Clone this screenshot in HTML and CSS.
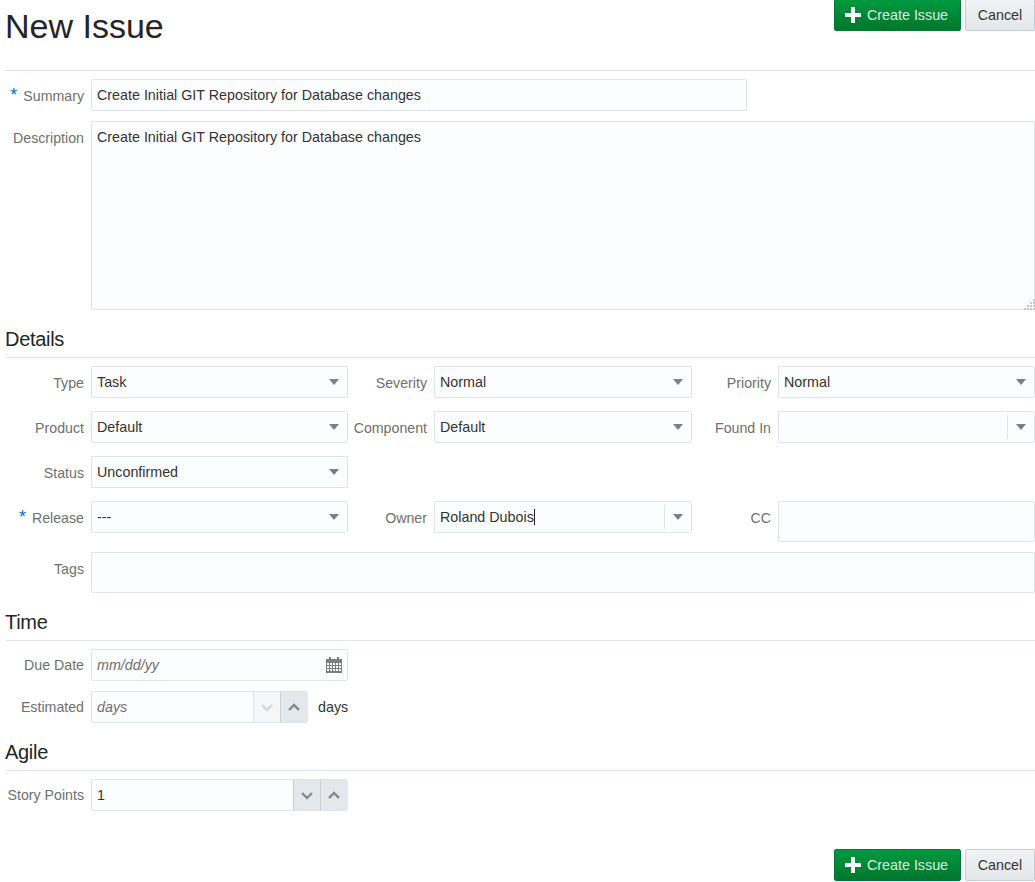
FILE: index.html
```html
<!DOCTYPE html>
<html lang="en">
	<head>
		<meta charset="UTF-8">
		<title>New Issue</title>
		<link rel="stylesheet" href="styles.css">
	</head>
	<body>
		<div class="page">
			<div class="page_head">
				<h1>New Issue</h1>
				<div class="actions">
					<button class="btn btn_primary" type="button">
						<svg class="plus" width="16" height="16" viewBox="0 0 16 16"><path d="M6 0h4v6h6v4h-6v6H6v-6H0V6h6z"/></svg>
						Create Issue
					</button>
					<button class="btn btn_cancel" type="button">Cancel</button>
				</div>
			</div>

			<div class="section">
				<div class="field field_summary">
					<label class="lbl lbl_main"><span class="req">*</span>Summary</label>
					<input class="ctl ctl_grow" type="text" value="Create Initial GIT Repository for Database changes">
				</div>
				<div class="field field_desc">
					<label class="lbl lbl_main">Description</label>
					<div class="desc_box">
						<textarea class="ctl desc">Create Initial GIT Repository for Database changes</textarea>
						<svg class="grip" width="11" height="11" viewBox="0 0 11 11"><path d="M9 0h2v2H9zM6 3h2v2H6zM9 3h2v2H9zM3 6h2v2H3zM6 6h2v2H6zM9 6h2v2H9zM0 9h2v2H0zM3 9h2v2H3zM6 9h2v2H6zM9 9h2v2H9z" /></svg>
					</div>
				</div>
			</div>

			<h2>Details</h2>
			<div class="details">
				<div class="field">
					<label class="lbl lbl_main">Type</label>
					<div class="ctl select"><span>Task</span><i class="arrow"></i></div>
				</div>
				<div class="field">
					<label class="lbl">Severity</label>
					<div class="ctl select"><span>Normal</span><i class="arrow"></i></div>
				</div>
				<div class="field">
					<label class="lbl">Priority</label>
					<div class="ctl select"><span>Normal</span><i class="arrow"></i></div>
				</div>

				<div class="field">
					<label class="lbl lbl_main">Product</label>
					<div class="ctl select"><span>Default</span><i class="arrow"></i></div>
				</div>
				<div class="field">
					<label class="lbl">Component</label>
					<div class="ctl select"><span>Default</span><i class="arrow"></i></div>
				</div>
				<div class="field">
					<label class="lbl">Found In</label>
					<div class="ctl select combo"><span></span><b class="sep"></b><i class="arrow"></i></div>
				</div>

				<div class="field">
					<label class="lbl lbl_main">Status</label>
					<div class="ctl select"><span>Unconfirmed</span><i class="arrow"></i></div>
				</div>
				<div></div>
				<div></div>

				<div class="field">
					<label class="lbl lbl_main"><span class="req">*</span>Release</label>
					<div class="ctl select"><span>---</span><i class="arrow"></i></div>
				</div>
				<div class="field">
					<label class="lbl">Owner</label>
					<div class="ctl select combo"><span class="typed">Roland Dubois</span><b class="sep"></b><i class="arrow"></i></div>
				</div>
				<div class="field">
					<label class="lbl">CC</label>
					<div class="ctl tall"></div>
				</div>
			</div>
			<div class="field field_tags">
				<label class="lbl lbl_main">Tags</label>
				<div class="ctl tall ctl_grow"></div>
			</div>

			<h2 class="h2_next">Time</h2>
			<div class="stack">
				<div class="field">
					<label class="lbl lbl_main">Due Date</label>
					<div class="ctl select date">
						<span class="hint">mm/dd/yy</span>
						<svg class="cal" width="16" height="16" viewBox="0 0 16 16"><path d="M3 0h2v2h6V0h2v2h3v14H0V2h3zM1 6v2h2V6zm3 0v2h2V6zm3 0v2h2V6zm3 0v2h2V6zm3 0v2h2V6zM1 9v2h2V9zm3 0v2h2V9zm3 0v2h2V9zm3 0v2h2V9zm3 0v2h2V9zM1 12v2h2v-2zm3 0v2h2v-2zm3 0v2h2v-2zm3 0v2h2v-2zm3 0v2h2v-2z" fill-rule="evenodd"/></svg>
					</div>
				</div>
				<div class="field">
					<label class="lbl lbl_main">Estimated</label>
					<div class="ctl spin spin_short">
						<span class="hint">days</span>
						<button class="step step_off" type="button"><svg width="14" height="9" viewBox="0 0 14 9"><path d="M2 2l5 5 5-5" /></svg></button>
						<button class="step" type="button"><svg width="14" height="9" viewBox="0 0 14 9"><path d="M2 7l5-5 5 5" /></svg></button>
					</div>
					<span class="unit">days</span>
				</div>
			</div>

			<h2 class="h2_next">Agile</h2>
			<div class="field field_points">
				<label class="lbl lbl_main">Story Points</label>
				<div class="ctl spin">
					<span class="val">1</span>
					<button class="step" type="button"><svg width="14" height="9" viewBox="0 0 14 9"><path d="M2 2l5 5 5-5" /></svg></button>
					<button class="step" type="button"><svg width="14" height="9" viewBox="0 0 14 9"><path d="M2 7l5-5 5 5" /></svg></button>
				</div>
			</div>

			<div class="actions actions_bottom">
				<button class="btn btn_primary" type="button">
					<svg class="plus" width="16" height="16" viewBox="0 0 16 16"><path d="M6 0h4v6h6v4h-6v6H6v-6H0V6h6z"/></svg>
					Create Issue
				</button>
				<button class="btn btn_cancel" type="button">Cancel</button>
			</div>
		</div>
	</body>
</html>
```

FILE: styles.css
```css
* {
	margin: 0;
	padding: 0;
	box-sizing: border-box;
}

body {
	background: #fff;
	color: #333;
	font-family: "Liberation Sans", Arial, sans-serif;
	font-size: 14.3px;
	overflow: hidden;
}

.page {
	padding-left: 5px;
	height: 882px;
}

.page_head {
	display: flex;
	justify-content: space-between;
	align-items: flex-start;
	height: 71px;
	border-bottom: 1px solid #dfe4ea;
}

h1 {
	margin-top: 7px;
	font-size: 34px;
	font-weight: normal;
	line-height: 38px;
	color: #252525;
}

h2 {
	height: 30px;
	margin-top: 18px;
	border-bottom: 1px solid #dfe4ea;
	font-size: 20px;
	font-weight: normal;
	line-height: 22px;
	color: #252525;
	letter-spacing: -0.3px;
}

.h2_next {
	margin-top: 18px;
}

.actions {
	display: flex;
	gap: 4px;
}

.actions_bottom {
	justify-content: flex-end;
	margin-top: 38px;
}

.btn {
	height: 32px;
	margin-top: -1px;
	border: 1px solid #c4ced7;
	border-radius: 2px;
	background: linear-gradient(#f0f2f4, #e4e8ea);
	color: #333;
	font: 14.3px "Liberation Sans", Arial, sans-serif;
	display: flex;
	align-items: center;
}

.actions_bottom .btn {
	margin-top: 0;
}

.btn_cancel {
	width: 70px;
	justify-content: center;
}

.btn_primary {
	width: 127px;
	padding: 0 10px;
	gap: 6px;
	border-color: #007a2e;
	background: linear-gradient(#009a40, #00762c);
	color: #dcefe2;
}

.plus {
	flex: none;
	fill: #fff;
}

.section {
	padding-top: 8px;
}

.field {
	display: flex;
	align-items: flex-start;
}

.field_desc {
	margin-top: 10px;
}

.lbl {
	flex: none;
	width: 74px;
	margin-right: 7px;
	padding-top: 9px;
	text-align: right;
	color: #6f6f6f;
	font-size: 14.2px;
	line-height: 16px;
	white-space: nowrap;
}

.lbl_main {
	width: 79px;
}

.stack .lbl,
.field_points .lbl {
	padding-top: 8px;
}

.req {
	margin-right: 6px;
	color: #0572ce;
	font-size: 18px;
	line-height: 10px;
}

.ctl {
	display: block;
	width: 100%;
	height: 32px;
	border: 1px solid #dfe4ea;
	border-radius: 2px;
	background: #fcfdfe;
	color: #333;
	font: 14.3px/30px "Liberation Sans", Arial, sans-serif;
	padding: 0 5px;
	outline: none;
}

.ctl_grow {
	flex: 1;
}

.field_summary .ctl {
	flex: none;
	width: 656px;
}

.desc_box {
	position: relative;
	flex: 1;
	height: 189px;
}

.desc {
	height: 100%;
	padding-top: 0;
	line-height: 30px;
	resize: none;
}

.grip {
	position: absolute;
	right: 0;
	bottom: 0;
	fill: #c6c6c6;
}

.details {
	display: grid;
	grid-template-columns: 343px 339px 1fr;
	column-gap: 5px;
	row-gap: 13px;
	padding-top: 8px;
}

.select {
	display: flex;
	align-items: center;
}

.select span {
	flex: 1;
}

.arrow {
	width: 0;
	height: 0;
	margin-right: 3px;
	border-left: 5px solid transparent;
	border-right: 5px solid transparent;
	border-top: 6px solid #7e7e7e;
}

.sep {
	width: 1px;
	height: 24px;
	margin-right: 8px;
	background: #dfe4ea;
}

.typed {
	flex: none !important;
	margin-right: auto;
	border-right: 1px solid #222;
	line-height: 16px;
}

.tall {
	height: 41px;
}

.field_tags {
	margin-top: 10px;
}

.stack {
	display: flex;
	flex-direction: column;
	gap: 10px;
	padding-top: 8px;
	width: 343px;
}

.field_points {
	padding-top: 8px;
}

.hint {
	color: #6f6f6f;
	font-style: italic;
}

.date .cal {
	fill: #7e7e7e;
}

.spin {
	display: flex;
	align-items: stretch;
	flex: none;
	width: 257px;
	padding-right: 0;
	overflow: hidden;
}

.spin_short {
	width: 217px;
}

.spin span {
	flex: 1;
}

.step {
	flex: none;
	width: 27px;
	border: none;
	border-left: 1px solid #c4ced7;
	background: #e4e8ea;
	display: flex;
	align-items: center;
	justify-content: center;
}

.step svg {
	fill: none;
	stroke: #7e8b94;
	stroke-width: 2.4;
}

.step_off {
	border-left-color: #dfe4ea;
	background: #f4f6f7;
}

.step_off svg {
	stroke: #d4d9dd;
}

.unit {
	margin-left: 10px;
	line-height: 32px;
}
```
